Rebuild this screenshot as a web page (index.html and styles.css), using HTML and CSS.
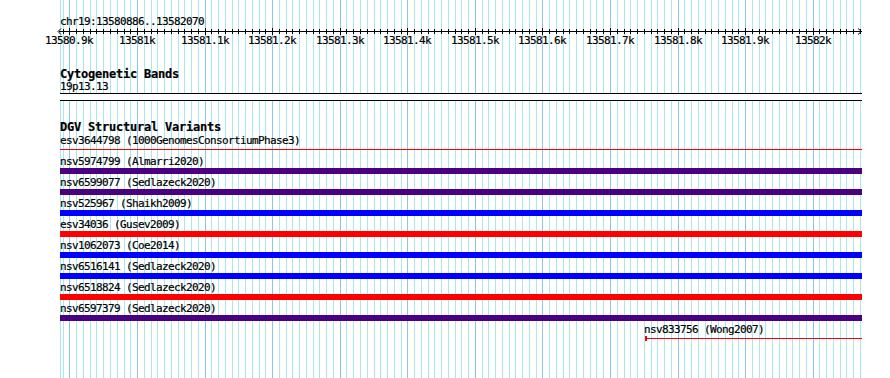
FILE: index.html
```html
<!DOCTYPE html>
<html>
<head>
<meta charset="utf-8">
<title>DGV Structural Variants</title>
<link rel="stylesheet" href="styles.css">
</head>
<body>
<div id="panel">
  <svg id="grid" width="890" height="378"></svg>
  <div id="tracks">
    <div class="ruler">
      <div class="seqname">chr19:13580886..13582070</div>
      <svg id="scale" width="802" height="19"></svg>
    </div>
    <div class="track cyto">
      <div class="track-title">Cytogenetic Bands</div>
      <div class="label">19p13.13</div>
      <div class="band"></div>
    </div>
    <div class="track dgv">
      <div class="track-title">DGV Structural Variants</div>
      <div class="feature thin red">
        <div class="label">esv3644798 (1000GenomesConsortiumPhase3)</div>
        <div class="glyph"><div class="line"></div></div>
      </div>
      <div class="feature purple">
        <div class="label">nsv5974799 (Almarri2020)</div>
        <div class="glyph"></div>
      </div>
      <div class="feature purple">
        <div class="label">nsv6599077 (Sedlazeck2020)</div>
        <div class="glyph"></div>
      </div>
      <div class="feature blue">
        <div class="label">nsv525967 (Shaikh2009)</div>
        <div class="glyph"></div>
      </div>
      <div class="feature red">
        <div class="label">esv34036 (Gusev2009)</div>
        <div class="glyph"></div>
      </div>
      <div class="feature blue">
        <div class="label">nsv1062073 (Coe2014)</div>
        <div class="glyph"></div>
      </div>
      <div class="feature blue">
        <div class="label">nsv6516141 (Sedlazeck2020)</div>
        <div class="glyph"></div>
      </div>
      <div class="feature red">
        <div class="label">nsv6518824 (Sedlazeck2020)</div>
        <div class="glyph"></div>
      </div>
      <div class="feature purple">
        <div class="label">nsv6597379 (Sedlazeck2020)</div>
        <div class="glyph"></div>
      </div>
      <div class="feature thin red" style="margin-left:584px">
        <div class="label">nsv833756 (Wong2007)</div>
        <div class="glyph"><div class="cap"></div><div class="line"></div></div>
      </div>
    </div>
  </div>
</div>
<script src="script.js"></script>
</body>
</html>
```

FILE: styles.css
```css
body{
	margin:0;
	background:#fff;
}
#panel{
	position:relative;
	width:890px;
	height:378px;
	overflow:hidden;
}
#grid{
	position:absolute;
	top:0;
	left:0;
	z-index:0;
}
#tracks{
	position:relative;
	z-index:1;
	width:802px;
	padding:15px 0 0 60px;
	font-family:"DejaVu Sans Mono","Liberation Mono",monospace;
	font-size:11px;
	letter-spacing:-0.62px;
	color:#000;
	-webkit-text-stroke:0.2px #000;
}
.seqname{
	height:13px;
	line-height:13px;
	white-space:nowrap;
}
#scale{
	display:block;
	overflow:visible;
}
#scale text{
	font-family:"DejaVu Sans Mono","Liberation Mono",monospace;
	font-size:11px;
	letter-spacing:-0.62px;
	stroke:#000;
	stroke-width:0.2px;
}
.track-title{
	font-weight:bold;
	font-size:12px;
	letter-spacing:-0.22px;
	height:12px;
	line-height:12px;
	white-space:nowrap;
}
.cyto{
	margin-top:21px;
}
.cyto .label{
	margin-top:1px;
	height:11px;
	line-height:11px;
}
.band{
	margin-top:1px;
	height:6px;
	border-top:1px solid #000;
	border-bottom:1px solid #000;
	background:#fff;
}
.dgv{
	margin-top:21px;
}
.dgv .track-title{
	height:10px;
	line-height:11px;
}
.label{
	white-space:nowrap;
}
.feature .label{
	box-sizing:border-box;
	height:15px;
	padding-top:2px;
	line-height:13px;
}
.feature .glyph{
	height:6px;
}
.purple .glyph{ background:#4b0082; }
.blue .glyph{ background:#0000ff; }
.red .glyph{ background:#ff0000; }
.thin .glyph{
	background:none;
	display:flex;
	align-items:flex-start;
}
.thin .line{
	flex:1;
	height:1px;
	margin-top:2px;
	background:#ff0000;
}
.thin .cap{
	width:2px;
	height:5px;
	margin-left:1px;
	background:#ff0000;
}
```

FILE: script.js
```js
var START=13580886,END=13582070,LEFT=60,WIDTH=800;
var NS='http://www.w3.org/2000/svg';

function xpos(bp){
	return Math.round(LEFT+(bp-START)*WIDTH/(END-START));
}
function el(name,attrs,parent){
	var e=document.createElementNS(NS,name);
	for(var k in attrs)e.setAttribute(k,attrs[k]);
	parent.appendChild(e);
	return e;
}

(function(){
	var grid=document.getElementById('grid');
	var scale=document.getElementById('scale');
	var first=Math.ceil(START/10)*10;

	// left edge of the grid
	el('line',{x1:LEFT+0.5,y1:0,x2:LEFT+0.5,y2:378,stroke:'#aae8ee','shape-rendering':'crispEdges'},grid);

	// ruler line and arrows (scale svg starts at x=60, y=28)
	var g=el('g',{stroke:'#000','stroke-width':1,fill:'none','shape-rendering':'crispEdges'},scale);
	el('line',{x1:-1,y1:3.5,x2:802,y2:3.5},g);
	el('polyline',{points:'1,0.5 -2,3.5 1,6.5','shape-rendering':'auto'},g);
	el('polyline',{points:'798,0.5 801.5,3.5 798,6.5','shape-rendering':'auto'},g);

	for(var bp=first;bp<=END;bp+=10){
		var x=xpos(bp),major=(bp%100==0);
		el('line',{x1:x+0.5,y1:0,x2:x+0.5,y2:378,
			stroke:major?'#8cc4ea':'#aae8ee','shape-rendering':'crispEdges'},grid);
		var lx=x-LEFT+0.5;
		el('line',{x1:lx,y1:major?0:1,x2:lx,y2:major?7:6},g);
		if(major){
			var t=el('text',{x:x-LEFT,y:16,'text-anchor':'middle',fill:'#000'},scale);
			t.textContent=(bp/1000)+'k';
		}
	}
})();
```
